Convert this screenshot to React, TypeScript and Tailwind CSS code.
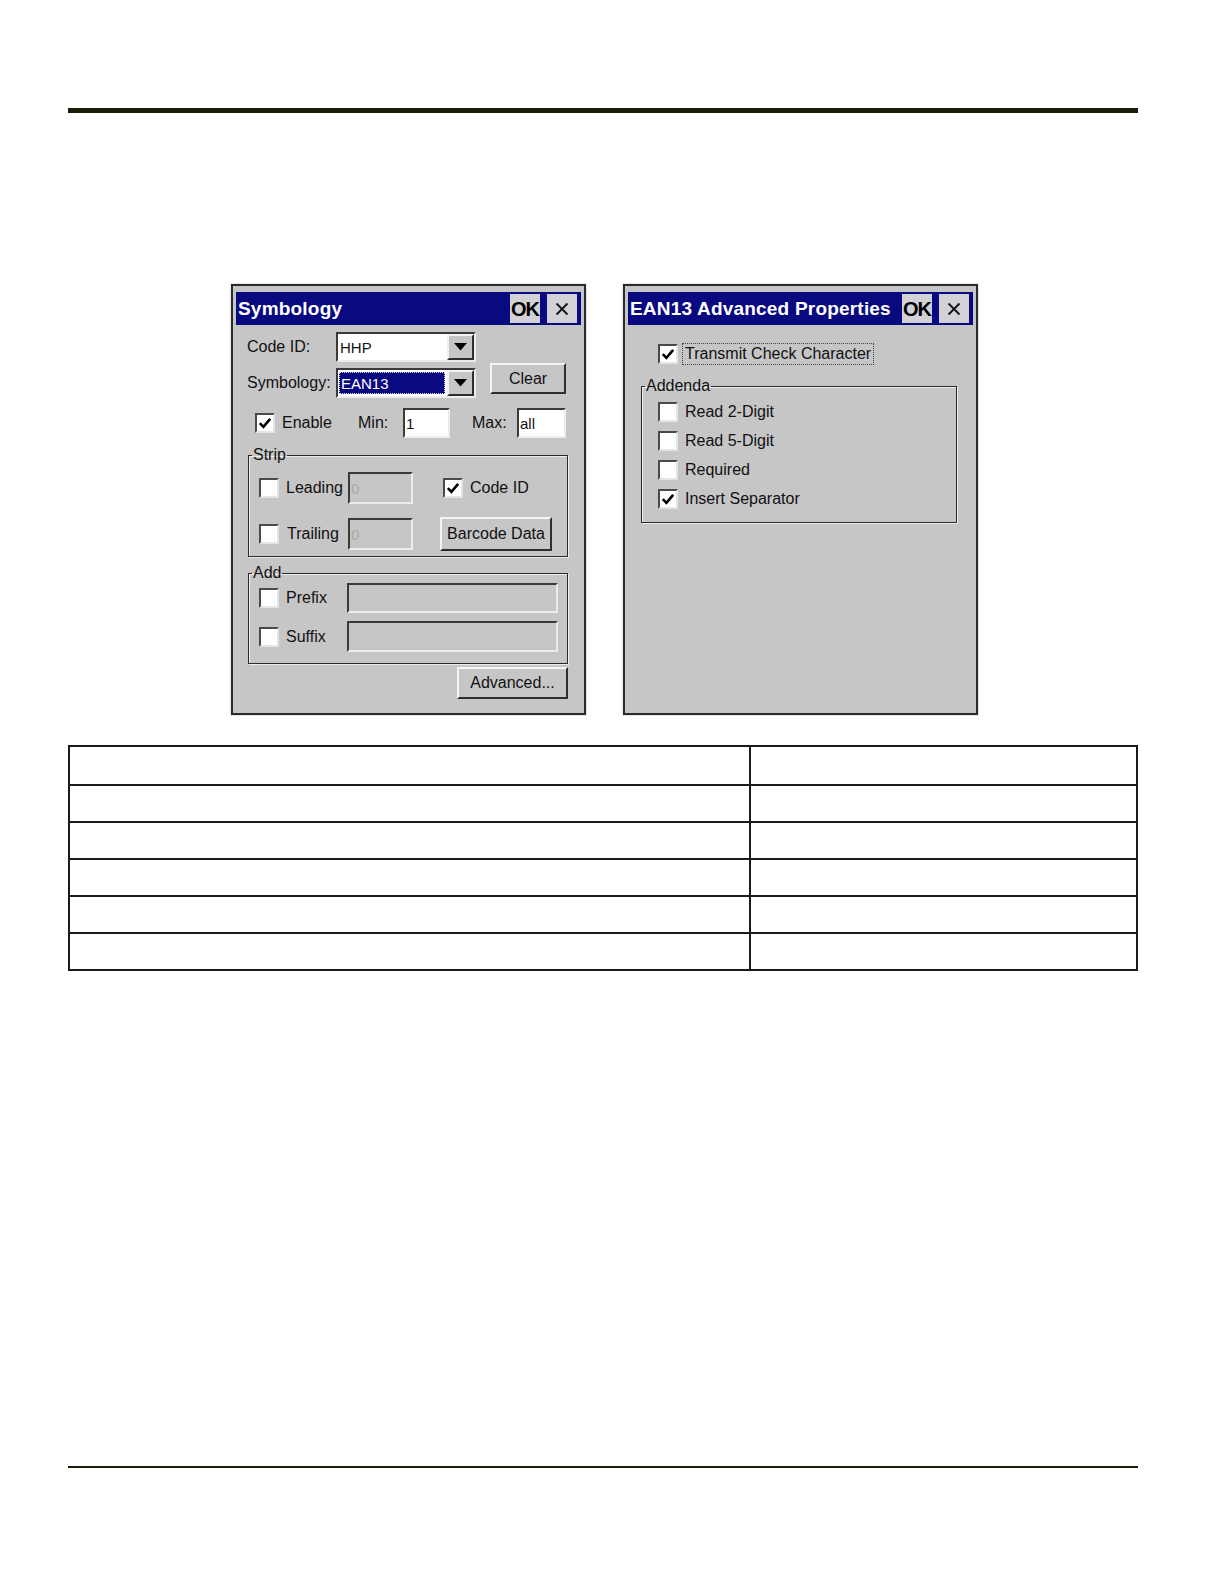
import type { ReactNode } from "react";

const font = "font-['Liberation_Sans',Arial,sans-serif]";

function Check({ checked = false }: { checked?: boolean }) {
  return (
    <span className="flex h-[20px] w-[20px] shrink-0 items-center justify-center border-[2px] border-b-[#e4e4e4] border-l-[#4a4a4a] border-r-[#e4e4e4] border-t-[#4a4a4a] bg-white">
      {checked && (
        <svg width="14" height="14" viewBox="0 0 14 14">
          <path d="M1.8 7.2 L5.4 10.8 L12.2 2.8" fill="none" stroke="#000" strokeWidth="2.6" />
        </svg>
      )}
    </span>
  );
}

function Field({ w, h, value, disabled = false }: { w: string; h: string; value?: string; disabled?: boolean }) {
  return (
    <div
      className={`${w} ${h} flex shrink-0 items-center border-[2px] border-b-[#ececec] border-l-[#3a3a3a] border-r-[#ececec] border-t-[#3a3a3a] pl-[1px] text-[15px] leading-none ${
        disabled ? "bg-[#c6c6c6] text-[#a9a9a9]" : "bg-white text-[#111]"
      }`}
    >
      {value}
    </div>
  );
}

function Combo({ value, selected = false }: { value: string; selected?: boolean }) {
  return (
    <div className="flex h-[30px] w-[140px] shrink-0 border-[2px] border-b-[#ececec] border-l-[#3a3a3a] border-r-[#ececec] border-t-[#3a3a3a] bg-white">
      <div className="flex flex-1 items-center pl-[1px] pr-[2px]">
        {selected ? (
          <span className="flex h-[22px] w-full items-center border border-dotted border-[#ddd] bg-[#0a0a80] pl-[1px] text-[15px] leading-none text-white">
            {value}
          </span>
        ) : (
          <span className="pl-[1px] text-[15px] leading-none text-[#111]">{value}</span>
        )}
      </div>
      <div className="flex w-[27px] items-center justify-center border-[2px] border-b-[#2e2e2e] border-l-[#f2f2f2] border-r-[#2e2e2e] border-t-[#f2f2f2] bg-[#c6c6c6]">
        <svg width="13" height="8" viewBox="0 0 13 8">
          <path d="M0 0 H13 L6.5 7.5 Z" fill="#000" />
        </svg>
      </div>
    </div>
  );
}

function Btn({ w, h, children }: { w: string; h: string; children: ReactNode }) {
  return (
    <div
      className={`${w} ${h} flex shrink-0 items-center justify-center border-[2px] border-b-[#2e2e2e] border-l-[#f4f4f4] border-r-[#2e2e2e] border-t-[#f4f4f4] bg-[#c6c6c6] text-[16px] leading-none text-[#111]`}
    >
      {children}
    </div>
  );
}

function Group({ label, w, className, children }: { label: string; w: string; className: string; children: ReactNode }) {
  return (
    <fieldset className={`${w} ${className} border border-[#2a2a2a] shadow-[inset_1px_1px_0_#ededed,1px_1px_0_#ededed]`}>
      <legend className="ml-[3px] px-[1px] text-[16px] leading-[18px] text-[#111]">{label}</legend>
      {children}
    </fieldset>
  );
}

function Window({ title, children }: { title: string; children: ReactNode }) {
  return (
    <div className="h-[433px] w-[357px] shrink-0 border border-[#e6e6e6]">
      <div className="h-full border-[2px] border-[#2b2b2b] bg-[#c6c6c6] px-[3px] pt-[6px]">
        <div className="flex h-[33px] items-center bg-[#0a0a80] pl-[2px] pr-[4px]">
          <span className="flex-1 text-[19px] font-bold leading-none tracking-[0.2px] text-white">{title}</span>
          <div className="flex h-[29px] w-[30px] items-center justify-center bg-[#d2d2d6] text-[20px] font-bold leading-none tracking-[-1px] text-black">
            OK
          </div>
          <div className="ml-[7px] flex h-[29px] w-[30px] items-center justify-center bg-[#d2d2d6]">
            <svg width="14" height="14" viewBox="0 0 14 14">
              <path d="M1.5 1.5 L12.5 12.5 M12.5 1.5 L1.5 12.5" stroke="#111" strokeWidth="1.8" />
            </svg>
          </div>
        </div>
        {children}
      </div>
    </div>
  );
}

function SymbologyDialog() {
  return (
    <Window title="Symbology">
      <div className="pl-[11px] text-[16px] leading-none text-[#111]">
        <div className="mt-[7px] flex h-[30px] items-center">
          <span className="w-[89px]">Code ID:</span>
          <Combo value="HHP" />
        </div>
        <div className="mt-[6px] flex h-[30px] items-center">
          <span className="w-[89px]">Symbology:</span>
          <Combo value="EAN13" selected />
          <div className="ml-[14px] -mt-[5px] self-start">
            <Btn w="w-[76px]" h="h-[31px]">Clear</Btn>
          </div>
        </div>
        <div className="mt-[10px] flex h-[30px] items-center">
          <div className="ml-[8px] flex w-[103px] items-center gap-[7px]">
            <Check checked />
            <span>Enable</span>
          </div>
          <span className="w-[45px]">Min:</span>
          <Field w="w-[47px]" h="h-[30px]" value="1" />
          <span className="ml-[22px] w-[45px]">Max:</span>
          <Field w="w-[49px]" h="h-[30px]" value="all" />
        </div>

        <Group label="Strip" w="w-[320px]" className="ml-[1px] mt-[8px] pb-[5px]">
          <div className="mt-[8px] flex h-[32px] items-center pl-[10px]">
            <Check />
            <span className="ml-[7px] w-[62px]">Leading</span>
            <Field w="w-[65px]" h="h-[32px]" value="0" disabled />
            <div className="ml-[30px] flex items-center gap-[7px]">
              <Check checked />
              <span>Code ID</span>
            </div>
          </div>
          <div className="mt-[13px] flex h-[34px] items-center pl-[10px]">
            <Check />
            <span className="ml-[8px] w-[61px]">Trailing</span>
            <Field w="w-[65px]" h="h-[32px]" value="0" disabled />
            <div className="ml-[27px]">
              <Btn w="w-[112px]" h="h-[34px]">Barcode Data</Btn>
            </div>
          </div>
        </Group>

        <Group label="Add" w="w-[320px]" className="ml-[1px] mt-[7px] pb-[11px]">
          <div className="mt-[1px] flex h-[30px] items-center pl-[10px]">
            <Check />
            <span className="ml-[7px] w-[61px]">Prefix</span>
            <Field w="w-[211px]" h="h-[30px]" disabled />
          </div>
          <div className="mt-[8px] flex h-[31px] items-center pl-[10px]">
            <Check />
            <span className="ml-[7px] w-[61px]">Suffix</span>
            <Field w="w-[211px]" h="h-[31px]" disabled />
          </div>
        </Group>

        <div className="ml-[1px] mt-[3px] flex w-[320px] justify-end">
          <Btn w="w-[111px]" h="h-[32px]">Advanced...</Btn>
        </div>
      </div>
    </Window>
  );
}

function AdvancedDialog() {
  const rows: [string, boolean][] = [
    ["Read 2-Digit", false],
    ["Read 5-Digit", false],
    ["Required", false],
    ["Insert Separator", true],
  ];
  return (
    <Window title="EAN13 Advanced Properties">
      <div className="text-[16px] leading-none text-[#111]">
        <div className="ml-[30px] mt-[18px] flex h-[22px] items-center">
          <Check checked />
          <span className="ml-[4px] flex h-[22px] items-center border border-dotted border-[#444] px-[2px]">
            Transmit Check Character
          </span>
        </div>
        <Group label="Addenda" w="w-[316px]" className="ml-[13px] mt-[12px] pb-[13px]">
          <div className="mt-[7px] flex flex-col gap-[9px] pl-[16px]">
            {rows.map(([label, on]) => (
              <div key={label} className="flex h-[20px] items-center gap-[7px]">
                <Check checked={on} />
                <span>{label}</span>
              </div>
            ))}
          </div>
        </Group>
      </div>
    </Window>
  );
}

export default function App() {
  return (
    <div className={`${font} bg-white pb-[100px]`}>
      <div className="pt-[108px]">
        <div className="ml-[68px] h-[5px] w-[1070px] bg-[#1c1c08]" />
      </div>

      <div className="ml-[230px] mt-[170px] flex gap-[35px]">
        <SymbologyDialog />
        <AdvancedDialog />
      </div>

      <div className="ml-[68px] mt-[29px] w-[1070px] border-[2px] border-[#1a1a1a]">
        {[0, 1, 2, 3, 4, 5].map((i) => (
          <div
            key={i}
            className={`grid h-[37px] grid-cols-[681px_1fr] ${i > 0 ? "border-t-[2px] border-[#1a1a1a]" : ""}`}
          >
            <div className="border-r-[2px] border-[#1a1a1a]" />
            <div />
          </div>
        ))}
      </div>

      <div className="ml-[68px] mt-[495px] h-[2px] w-[1070px] bg-[#1c1c08]" />
    </div>
  );
}
